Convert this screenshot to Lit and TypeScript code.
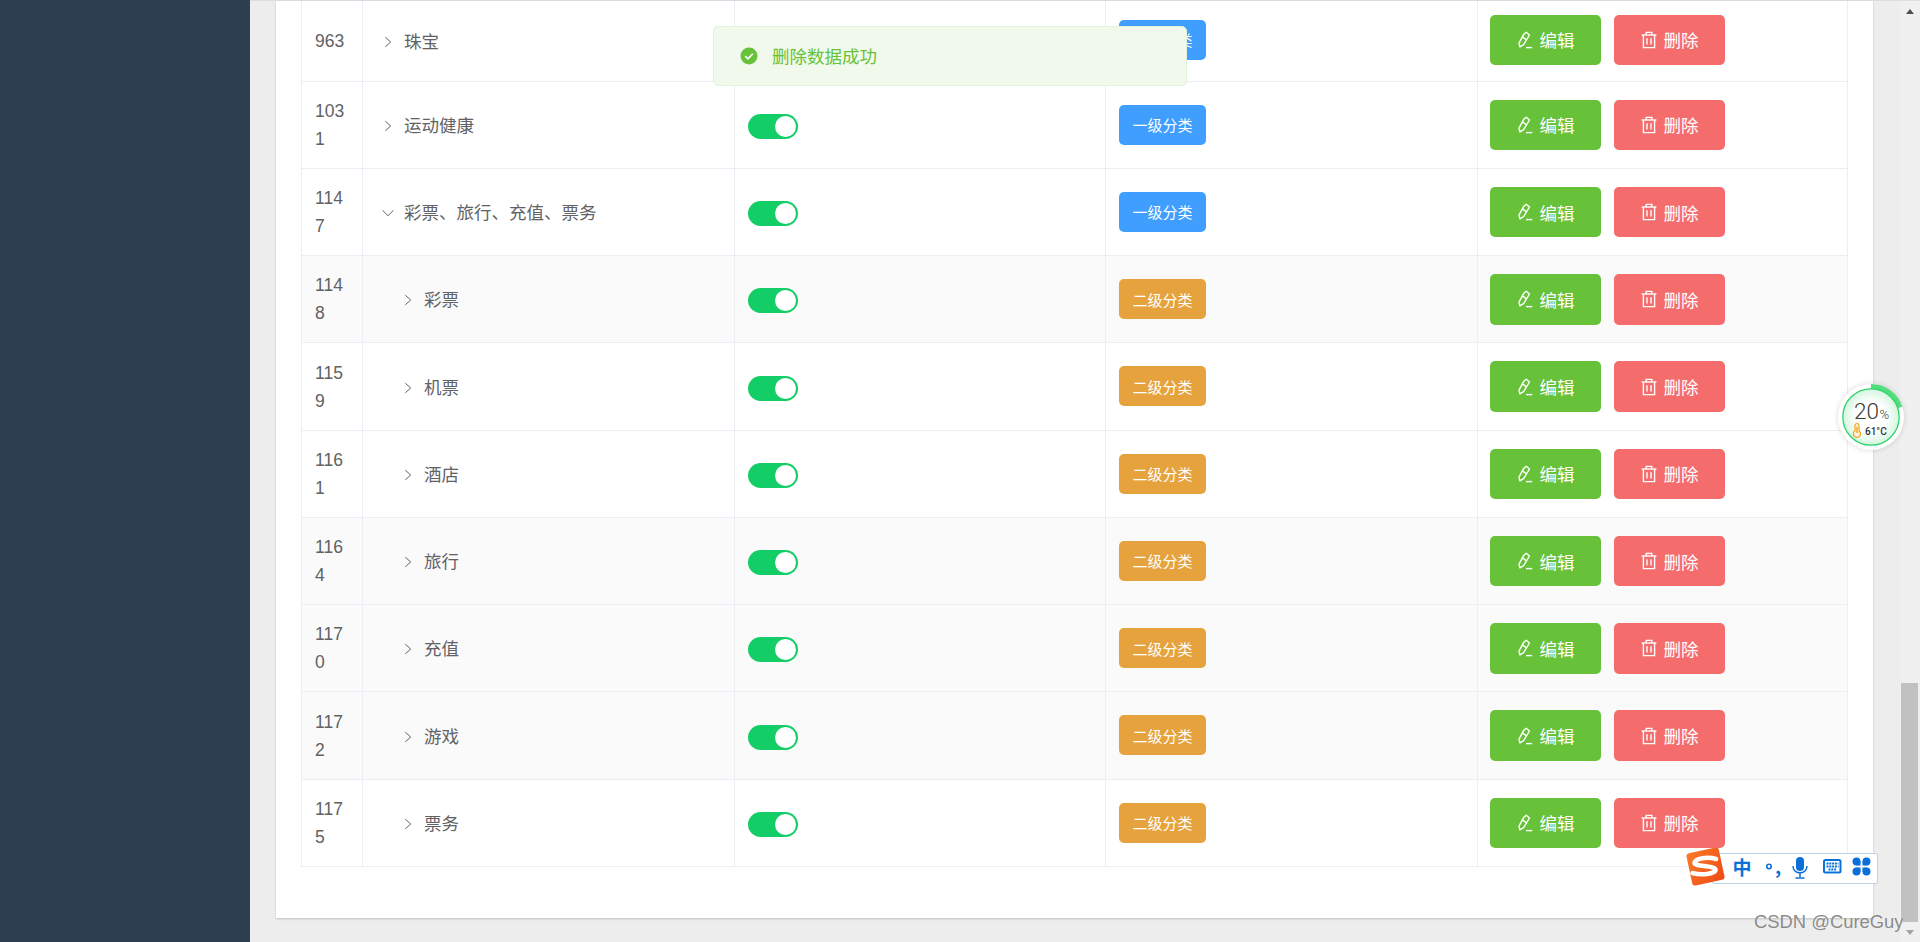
import { LitElement, html, css, svg } from "lit";
import { customElement } from "lit/decorators.js";

type Row = { id: string; name: string; level: 1 | 2; open?: boolean; on: boolean; tag: string; stripe?: boolean };

const ROWS: Row[] = [
  { id: "963", name: "珠宝", level: 1, on: true, tag: "一级分类" },
  { id: "1031", name: "运动健康", level: 1, on: true, tag: "一级分类" },
  { id: "1147", name: "彩票、旅行、充值、票务", level: 1, open: true, on: true, tag: "一级分类" },
  { id: "1148", name: "彩票", level: 2, on: true, tag: "二级分类", stripe: true },
  { id: "1159", name: "机票", level: 2, on: true, tag: "二级分类" },
  { id: "1161", name: "酒店", level: 2, on: true, tag: "二级分类" },
  { id: "1164", name: "旅行", level: 2, on: true, tag: "二级分类", stripe: true },
  { id: "1170", name: "充值", level: 2, on: true, tag: "二级分类", stripe: true },
  { id: "1172", name: "游戏", level: 2, on: true, tag: "二级分类", stripe: true },
  { id: "1175", name: "票务", level: 2, on: true, tag: "二级分类" },
];

const chevronRight = svg`<path d="M8.3 6.2 13.7 11 8.3 15.8" fill="none" stroke="#606266" stroke-width="1"/>`;
const chevronDown = svg`<path d="M5.5 8.3 11 13.7 16.5 8.3" fill="none" stroke="#606266" stroke-width="1"/>`;

const pencil = html`<svg class="ico" viewBox="0 0 16 18" width="16" height="18" fill="none" stroke="#fff" stroke-width="1.4">
  <path d="M6.6 3.6 9.2 1.2l3.3 2.8-5.9 9.7-3.7 2.1-.9-3.7z" stroke-linejoin="round"/>
  <path d="M5.2 5.8l4.4 3"/>
  <path d="M9 16.6h6.2"/>
</svg>`;

const trash = html`<svg class="ico" viewBox="0 0 16 18" width="16" height="18" fill="none" stroke="#fff" stroke-width="1.4">
  <path d="M.6 4h14.8"/>
  <path d="M5.2 4V1.4h5.6V4"/>
  <path d="M2.4 4v12.6h11.2V4"/>
  <path d="M6 7.2v6.2M10 7.2v6.2"/>
</svg>`;

@customElement("app-root")
export class AppRoot extends LitElement {
  static styles = css`
    :host {
      display: block;
      position: relative;
      height: 942px;
      overflow: hidden;
      font-family: "Liberation Sans", "Noto Sans CJK SC", sans-serif;
      font-size: 17.5px;
      color: #606266;
    }
    .page { display: flex; height: 942px; }
    .sidebar { width: 250px; flex: none; background: #2c3e50; }
    .main {
      flex: 1;
      min-width: 0;
      background: #ededed;
      border-top: 1px solid #dcdde2;
      padding: 0 27px 0 26px;
    }
    .card {
      background: #fff;
      padding: 0 25px 51px;
      box-shadow: 0 1px 2px rgba(0, 0, 0, 0.2);
    }
    .table { border-left: 1px solid #ebeef5; }
    .row {
      display: grid;
      grid-template-columns: 61px 372px 371px 372px 370px;
      height: 87.25px;
      box-sizing: border-box;
      border-bottom: 1px solid #ebeef5;
      background: #fff;
    }
    .row.stripe { background: #fafafa; }
    .row.first { height: 80.7px; }
    .cell {
      display: flex;
      align-items: center;
      box-sizing: border-box;
      padding: 0 14px;
      border-right: 1px solid #ebeef5;
      min-width: 0;
    }
    .row.first .cell { padding-bottom: 2px; }
    .row.first .idcell { padding-bottom: 0; }
    .idcell { padding-left: 13px; }
    .id { line-height: 28px; word-break: break-all; }
    .namecell { padding-top: 2px; }
    .row.first .namecell { padding-bottom: 0; }
    .lv2 { padding-left: 34px; }
    .chev { width: 22px; height: 22px; flex: none; margin-right: 5px; }
    .name { line-height: 28px; white-space: nowrap; }
    .switchcell { padding-left: 13px; }
    .switch {
      width: 50px;
      height: 25px;
      margin-top: 3px;
      border-radius: 13px;
      background: #13ce66;
      display: flex;
      align-items: center;
      justify-content: flex-end;
      padding-right: 2px;
      box-sizing: border-box;
    }
    .knob { width: 21px; height: 21px; border-radius: 50%; background: #fff; }
    .tagcell { padding-left: 13px; padding-bottom: 0.5px; }
    .tag {
      width: 87px;
      height: 40px;
      border-radius: 5px;
      color: #fff;
      font-size: 15px;
      display: flex;
      align-items: center;
      justify-content: center;
    }
    .tag.l1 { background: #409eff; }
    .tag.l2 { background: #e6a23c; }
    .actions { gap: 13px; padding-left: 12px; }
    .btn {
      width: 111px;
      height: 50.5px;
      border-radius: 5px;
      color: #fff;
      display: flex;
      align-items: center;
      justify-content: center;
      gap: 7px;
    }
    .btn.edit { background: #67c23a; }
    .btn.del { background: #f56c6c; }
    .ico { flex: none; }
    .scrollbar {
      width: 20px;
      flex: none;
      background: #f0f0f0;
      border-top: 1px solid #dcdde2;
      display: flex;
      flex-direction: column;
      align-items: center;
      position: relative;
    }
    .arrow { width: 0; height: 0; border-left: 4.5px solid transparent; border-right: 4.5px solid transparent; }
    .arrow.up { margin-top: 8px; border-bottom: 5px solid #505050; }
    .arrow.down { margin-top: auto; margin-bottom: 7px; border-top: 5px solid #a3a3a3; }
    .thumb { position: absolute; left: 1px; right: 2px; top: 682px; bottom: 20px; background: #c1c1c1; }

    .message {
      position: absolute;
      left: 713px;
      top: 26px;
      width: 474px;
      height: 60px;
      box-sizing: border-box;
      background: #f0f9eb;
      border: 1px solid #e1f3d8;
      border-radius: 5px;
      display: flex;
      align-items: center;
      padding: 0 0 2px 26px;
      gap: 14px;
      color: #67c23a;
    }
    .msg-ico { margin-top: 2px; }
    .floater { position: absolute; left: 1831px; top: 377px; width: 80px; height: 80px; }
    .ime {
      position: absolute;
      left: 1686px;
      top: 847px;
      width: 192px;
      height: 40px;
    }
    .ime-bar {
      position: absolute;
      left: 26px;
      right: 0;
      top: 6px;
      height: 31px;
      box-sizing: border-box;
      background: #fff;
      border: 1px solid #bcd2e8;
      border-radius: 2px;
    }
    .ime-svg { position: absolute; left: 0; top: 0; }
    .ime-text {
      font-family: "Noto Sans CJK SC", sans-serif;
      font-size: 19px;
      font-weight: 700;
      fill: #0b70d8;
    }
    .mark {
      position: absolute;
      left: 1754px;
      top: 911px;
      font-size: 18.4px;
      line-height: 22px;
      color: #8a8a8a;
      text-shadow: 0 0 1px rgba(255, 255, 255, 0.9);
      white-space: nowrap;
    }
    .t-big { font: 300 22.5px Roboto, "Liberation Sans", sans-serif; fill: #3a3a3a; }
    .t-pct { font: 300 13px Roboto, "Liberation Sans", sans-serif; fill: #3a3a3a; }
    .t-temp { font: 500 10px Roboto, "Liberation Sans", sans-serif; fill: #2a3340; }
  `;

  private renderRow(r: Row, i: number) {
    return html`<div class="row ${r.stripe ? "stripe" : ""} ${i === 0 ? "first" : ""}">
      <div class="cell idcell"><span class="id">${r.id}</span></div>
      <div class="cell namecell ${r.level === 2 ? "lv2" : ""}">
        <svg class="chev" viewBox="0 0 22 22">${r.open ? chevronDown : chevronRight}</svg>
        <span class="name">${r.name}</span>
      </div>
      <div class="cell switchcell"><div class="switch"><div class="knob"></div></div></div>
      <div class="cell tagcell"><div class="tag ${r.level === 1 ? "l1" : "l2"}">${r.tag}</div></div>
      <div class="cell actions">
        <div class="btn edit">${pencil}<span>编辑</span></div>
        <div class="btn del">${trash}<span>删除</span></div>
      </div>
    </div>`;
  }

  render() {
    return html`
      <div class="page">
        <aside class="sidebar"></aside>
        <main class="main">
          <section class="card">
            <div class="table">${ROWS.map((r, i) => this.renderRow(r, i))}</div>
          </section>
        </main>
        <div class="scrollbar">
          <div class="arrow up"></div>
          <div class="arrow down"></div>
          <div class="thumb"></div>
        </div>
      </div>

      <div class="message">
        <svg class="msg-ico" viewBox="0 0 18 18" width="18" height="18">
          <circle cx="9" cy="9" r="8.5" fill="#67c23a"/>
          <path d="M5.2 9.2 8 11.8l4.8-5" fill="none" stroke="#fff" stroke-width="1.6"/>
        </svg>
        <span>删除数据成功</span>
      </div>

      <svg class="floater" viewBox="0 0 80 80">
        <defs>
          <radialGradient id="fg" cx="50%" cy="50%" r="50%">
            <stop offset="0.55" stop-color="#ffffff"/>
            <stop offset="1" stop-color="#d4f5df"/>
          </radialGradient>
          <filter id="fs" x="-30%" y="-30%" width="160%" height="160%">
            <feGaussianBlur stdDeviation="2.5"/>
          </filter>
        </defs>
        <circle cx="40" cy="40" r="34" fill="#000" opacity="0.1" filter="url(#fs)"/>
        <circle cx="40" cy="40" r="33" fill="#fff"/>
        <path d="M40 9.5 A30.5 30.5 0 0 1 69 30.6" fill="none" stroke="#54dd7f" stroke-width="5"/>
        <circle cx="40" cy="40" r="28.2" fill="url(#fg)" stroke="#2fd46a" stroke-width="1.3"/>
        <text class="t-big" x="23" y="42">20</text>
        <text class="t-pct" x="48.500" y="42">%</text>
        <path d="M26 46.500c-1.300 0-2 .9-2 2v5.200a3.600 3.600 0 1 0 4 0v-5.200c0-1.100-.7-2-2-2z" fill="#fff3dc" stroke="#f3a21c" stroke-width="1.200"/>
        <path d="M26 50v6" stroke="#f3a21c" stroke-width="1.400"/>
        <text class="t-temp" x="34" y="58">61°C</text>
      </svg>

      <div class="ime">
        <div class="ime-bar"></div>
        <svg class="ime-svg" viewBox="0 0 192 40" width="192" height="40">
          <defs>
            <linearGradient id="sg" x1="0" y1="0" x2="1" y2="1">
              <stop offset="0" stop-color="#f97b2a"/>
              <stop offset="1" stop-color="#ef4a12"/>
            </linearGradient>
          </defs>
          <rect x="3" y="3" width="33" height="33" rx="3" fill="url(#sg)" transform="rotate(-12 19.500 19.500)"/>
          <path d="M30 12C22 9.500 9 11 8.500 16c-.4 3.500 20 2.500 21 6.500 .8 3.500-12 6.500-23 3.500" fill="none" stroke="#fff" stroke-width="4.600" stroke-linecap="round"/>
          <text class="ime-text" x="46.500" y="28">中</text>
          <circle cx="83" cy="19.500" r="2.200" fill="none" stroke="#0b70d8" stroke-width="1.600"/>
          <text class="ime-text" x="89" y="27">,</text>
          <rect x="110" y="10" width="8" height="14" rx="4" fill="#0b70d8"/>
          <path d="M107 19c0 9 14 9 14 0M114 26v4M109.500 31h9" fill="none" stroke="#0b70d8" stroke-width="1.500"/>
          <rect x="138" y="13" width="16.500" height="12.500" rx="1.500" fill="none" stroke="#0b70d8" stroke-width="2"/>
          <path d="M140.500 16.500h12M140.500 19.500h12M142.500 22.500h8" stroke="#0b70d8" stroke-width="2" stroke-dasharray="2 .8"/>
          <g fill="#0b70d8">
            <circle cx="170.500" cy="14.500" r="4"/><rect x="170.500" y="14.500" width="4" height="4"/>
            <circle cx="180.500" cy="14.500" r="4"/><rect x="176.500" y="14.500" width="4" height="4"/>
            <circle cx="170.500" cy="24.500" r="4"/><rect x="170.500" y="20.500" width="4" height="4"/>
            <circle cx="180.500" cy="24.500" r="4"/><rect x="176.500" y="20.500" width="4" height="4"/>
          </g>
        </svg>
      </div>

      <div class="mark">CSDN @CureGuy</div>
    `;
  }
}
